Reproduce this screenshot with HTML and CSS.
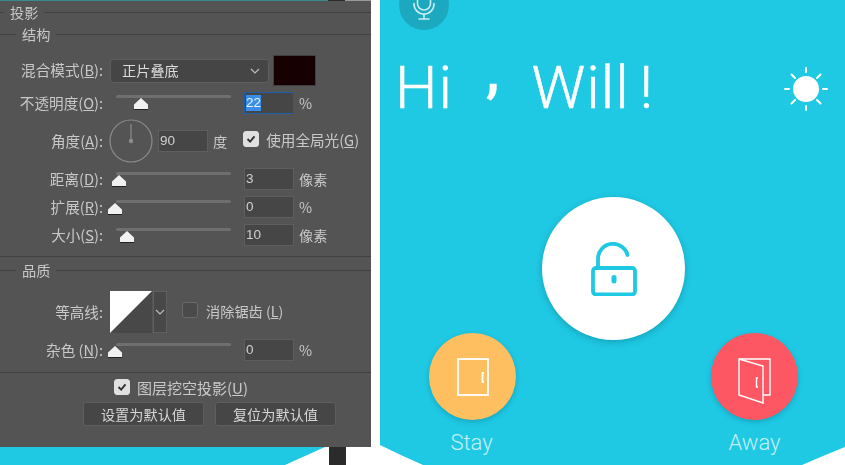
FILE: index.html
```html
<!DOCTYPE html>
<html lang="zh">
<head>
<meta charset="utf-8">
<title>Shadow panel and home app</title>
<link rel="stylesheet" href="styles.css">
</head>
<body>
<div class="stage">
  <section class="left">
    <div class="panel">
      <div class="legend title"><span>投影</span></div>
      <div class="legend group"><span>结构</span></div>

      <div class="row row-blend">
        <label class="label">混合模式(<u>B</u>):</label>
        <div class="select"><span>正片叠底</span>
          <svg class="chev" viewBox="0 0 10 6"><path d="M1 1l4 4 4-4"/></svg>
        </div>
        <div class="swatch"></div>
      </div>

      <div class="row row-opacity">
        <label class="label">不透明度(<u>O</u>):</label>
        <div class="slider slider-opacity"><i class="thumb" style="left:18px"></i></div>
        <div class="input focus"><span class="selected">22</span></div>
        <span class="unit">%</span>
      </div>

      <div class="row row-angle">
        <label class="label">角度(<u>A</u>):</label>
        <svg class="dial" viewBox="0 0 44 44"><circle cx="22" cy="22" r="21"/><path d="M22 22V5"/><circle class="pin" cx="22" cy="22" r="1.6"/></svg>
        <div class="input"><span>90</span></div>
        <span class="unit">度</span>
        <span class="check on"><svg viewBox="0 0 16 16"><path d="M4 8l3 3 5-6"/></svg></span>
        <span class="check-text">使用全局光(<u>G</u>)</span>
      </div>

      <div class="row row-gap">
        <label class="label">距离(<u>D</u>):</label>
        <div class="slider"><i class="thumb" style="left:-4px"></i></div>
        <div class="input"><span>3</span></div>
        <span class="unit">像素</span>
      </div>
      <div class="row row-gap">
        <label class="label">扩展(<u>R</u>):</label>
        <div class="slider"><i class="thumb" style="left:-8px"></i></div>
        <div class="input"><span>0</span></div>
        <span class="unit">%</span>
      </div>
      <div class="row row-gap">
        <label class="label">大小(<u>S</u>):</label>
        <div class="slider"><i class="thumb" style="left:4px"></i></div>
        <div class="input"><span>10</span></div>
        <span class="unit">像素</span>
      </div>

      <hr class="rule rule-a">
      <div class="legend group"><span>品质</span></div>

      <div class="row row-contour">
        <label class="label">等高线:</label>
        <svg class="contour" viewBox="0 0 42 42"><rect width="42" height="42" fill="#fff"/><path d="M42 0V42H0z" fill="#484848"/></svg>
        <div class="contour-drop"><svg class="chev" viewBox="0 0 10 6"><path d="M1 1l4 4 4-4"/></svg></div>
        <span class="check"></span>
        <span class="check-text">消除锯齿 (<u>L</u>)</span>
      </div>

      <div class="row row-noise">
        <label class="label">杂色 (<u>N</u>):</label>
        <div class="slider"><i class="thumb" style="left:-8px"></i></div>
        <div class="input"><span>0</span></div>
        <span class="unit">%</span>
      </div>

      <hr class="rule rule-b">

      <div class="row row-knockout">
        <span class="check on"><svg viewBox="0 0 16 16"><path d="M4 8l3 3 5-6"/></svg></span>
        <span class="check-text">图层挖空投影(<u>U</u>)</span>
      </div>
      <div class="row row-buttons">
        <button class="btn">设置为默认值</button>
        <button class="btn">复位为默认值</button>
      </div>
    </div>
    <div class="strip"></div>
    <div class="stand"></div>
  </section>

  <section class="phone">
    <div class="mic">
      <svg viewBox="0 0 24 24"><rect x="5.5" y="-10" width="13" height="20" rx="6.5"/><path d="M2 3v1a10 10 0 0 0 20 0V3M12 14v5M6.5 19h11"/></svg>
    </div>
    <header class="greeting">
      <h1><span class="hi">Hi</span><span class="comma">,</span><span class="will">Will</span><span class="bang">!</span></h1>
      <svg class="sun" viewBox="0 0 44 44">
        <circle cx="22" cy="22" r="13"/>
        <path d="M22 1v4M22 39v4M1 22h4M39 22h4M7.5 7.5l3.5 3.5M33 33l3.5 3.5M7.5 36.500l3.500-3.500M33 11l3.500-3.500"/>
      </svg>
    </header>
    <button class="lock-btn" aria-label="Unlock">
      <svg viewBox="0 0 46 54"><rect x="2" y="26" width="42" height="26.500" rx="3"/><path d="M7 26V17A15 15 0 0 1 36.500 13"/><path class="keyhole" d="M23 35.500v3.500"/></svg>
    </button>
    <div class="modes">
      <div class="mode">
        <div class="disc stay">
          <svg viewBox="0 0 32 38"><rect x="1" y="1" width="30" height="36"/><path class="handle" d="M27 15h-1.500v9H27"/></svg>
        </div>
        <span class="mode-stay">Stay</span>
      </div>
      <div class="mode">
        <div class="disc away">
          <svg viewBox="0 0 33 46"><path d="M1 1h31v36h-7"/><path d="M1 1l24 7v37L1 37z"/><path class="handle" d="M20 20h-1.500v9H20"/></svg>
        </div>
        <span>Away</span>
      </div>
    </div>
  </section>
</div>
</body>
</html>
```

FILE: styles.css
```css
* { box-sizing: border-box; }
html, body { margin: 0; height: 465px; overflow: hidden; background: #fff; }

.stage { display: flex; width: 845px; height: 465px; }

/* ---------- left: layer style dialog ---------- */
.left { position: relative; width: 380px; flex: none; }
.panel {
  width: 371px;
  height: 447px;
  padding-top: 1px;
  background: linear-gradient(90deg, #3a8a92 328px, #2b2b2b 328px, #2b2b2b 345px, #9a9a9a 345px) top / 100% 1px no-repeat, #545454;
  color: #c9c9c9;
  font: 14.2px/1 "Noto Sans CJK SC", "Liberation Sans", sans-serif;
  overflow: hidden;
  filter: blur(.45px);
}
.strip {
  width: 371px;
  height: 18px;
  background: #1fc8e3;
  clip-path: polygon(0 0, 325px 0, 285px 18px, 0 18px);
}
.stand {
  position: absolute;
  left: 329px;
  top: 447px;
  width: 17px;
  height: 18px;
  background: #2b2b2b;
}

.legend { display: flex; align-items: center; height: 23px; }
.legend::after { content: ""; flex: 1; height: 1px; background: #414141; margin-left: 6px; }
.legend::before { content: ""; height: 1px; background: #414141; margin-right: 6px; }
.title { height: 22px; }
.title::before { width: 4px; }
.group::before { width: 16px; }

.row { display: flex; align-items: center; }
.label { width: 103px; flex: none; text-align: right; white-space: nowrap; font-size: 14.6px; }
u { text-underline-offset: 1px; }

.row-blend { height: 31px; margin-top: 9px; }
.select {
  width: 159px;
  height: 24px;
  margin-left: 7px;
  padding: 0 8px 0 11px;
  display: flex;
  align-items: center;
  justify-content: space-between;
  background: #454545;
  border: 1px solid #5e5e5e;
  border-radius: 3px;
  color: #dcdcdc;
}
.chev { width: 10px; height: 6px; fill: none; stroke: #bdbdbd; stroke-width: 1.2; }
.swatch {
  width: 43px;
  height: 31px;
  margin-left: 4px;
  background: #160001;
  border: 1px solid #3f3f3f;
}

.row-opacity { height: 22px; margin-top: 6px; }
.row-angle { height: 42px; margin-top: 6px; }
.row-gap { height: 22px; margin-top: 6px; }
.row-noise { height: 22px; margin-top: 6px; }

.slider {
  position: relative;
  width: 115px;
  height: 3px;
  margin: -11px 13px 0 13px;
  flex: none;
  background: #6f6f6f;
  border-radius: 2px;
}
.slider-opacity { margin-top: -13px; }
.thumb {
  position: absolute;
  top: 3px;
  width: 14px;
  height: 12px;
  background: #f1f1f1;
  clip-path: polygon(50% 0, 100% 55%, 100% 100%, 0 100%, 0 55%);
  border-bottom: 1px solid #222;
}
.input {
  width: 50px;
  height: 22px;
  flex: none;
  padding-left: 1px;
  display: flex;
  align-items: center;
  background: #464646;
  border: 1px solid #5e5e5e;
  font: 13.5px/1 "Liberation Sans", sans-serif;
  color: #d0d0d0;
}
.input.focus { border-color: #1c5fa8; }
.selected { background: #3b8ee8; color: #e9f3ff; padding: 1px 0; }
.unit { margin-left: 5px; white-space: nowrap; }

.dial { width: 44px; height: 44px; margin-left: 6px; flex: none; fill: none; stroke: #8c8c8c; stroke-width: 1.2; }
.dial .pin { fill: #8c8c8c; }
.row-angle .input { margin-left: 5px; }
.check {
  width: 16px;
  height: 16px;
  flex: none;
  border-radius: 3px;
  border: 1px solid #6a6a6a;
  background: #4a4a4a;
}
.check svg { display: block; width: 14px; height: 14px; fill: none; stroke: #333; stroke-width: 2.2; }
.check.on { background: #e0e0e0; border-color: #e0e0e0; }
.check-text { margin-left: 8px; white-space: nowrap; }
.row-angle .check { margin-left: 16px; margin-top: -4px; }
.row-angle .check-text { margin-top: -1px; margin-left: 7px; font-size: 14.6px; }

.rule { height: 1px; border: 0; background: #414141; margin: 0; }
.rule-a { margin-top: 10px; margin-bottom: 2px; }

.row-contour { height: 42px; margin-top: 9px; }
.contour { width: 42px; height: 42px; margin-left: 7px; flex: none; }
.contour-drop {
  width: 14px;
  height: 42px;
  margin-left: 1px;
  display: flex;
  align-items: center;
  justify-content: center;
  background: #484848;
  border: 1px solid #5e5e5e;
}
.row-contour .check { margin-left: 15px; margin-top: -5px; }
.row-contour .check-text { margin-left: 8px; margin-top: -2px; }

.rule-b { margin-top: 11px; }

.row-knockout { height: 20px; margin-top: 4px; padding-left: 114px; }
.row-knockout .check-text { margin-left: 7px; font-size: 15px; }
.row-buttons { gap: 11px; padding-left: 83px; margin-top: 5px; }
.btn {
  width: 121px;
  height: 24px;
  padding: 0;
  background: #464646;
  border: 1px solid #5e5e5e;
  border-radius: 3px;
  color: #d6d6d6;
  font: 14.2px/1 "Noto Sans CJK SC", sans-serif;
}

/* ---------- right: phone app ---------- */
.phone {
  width: 465px;
  height: 465px;
  flex: none;
  overflow: hidden;
  background: #1fc8e3;
  color: #fff;
  font-family: Roboto, "Liberation Sans", sans-serif;
  clip-path: path("M0 0H465V447Q445 455 422 465H43Q20 455 0 445Z");
}
.mic {
  width: 50px;
  height: 50px;
  margin: -20px 0 0 19px;
  padding-top: 20px;
  display: flex;
  justify-content: center;
  border-radius: 50%;
  background: #1ca9c0;
}
.mic svg { width: 24px; height: 24px; fill: none; stroke: #c8eef5; stroke-width: 1.6; }

.greeting {
  display: flex;
  justify-content: space-between;
  align-items: center;
  height: 60px;
  margin-top: 28px;
  padding: 0 17px 0 15px;
}
.greeting h1 {
  margin: 0;
  display: flex;
  font-weight: 300;
  font-size: 60px;
  line-height: 60px;
  letter-spacing: 1px;
  -webkit-text-stroke: .5px #fff;
}
.comma { margin-left: 33px; font-weight: 500; transform: translateY(-17px); }
.will { margin-left: 31px; }
.bang { margin-left: 10px; }
.sun { width: 44px; height: 44px; margin-top: 2px; fill: #fff; stroke: none; }
.sun path { fill: none; stroke: #fff; stroke-width: 2; stroke-linecap: round; }

.lock-btn {
  display: block;
  width: 143px;
  height: 143px;
  margin: 79px 0 0 162px;
  padding: 0;
  border: 0;
  border-radius: 50%;
  background: #fff;
  box-shadow: 0 2px 6px rgba(0, 90, 110, .35);
}
.lock-btn svg { display: block; width: 46px; height: 54px; margin: 0 auto; fill: none; stroke: #1fc8e3; stroke-width: 3.8; stroke-linecap: round; }
.lock-btn .keyhole { stroke-width: 5; }

.modes { display: flex; justify-content: space-between; margin-top: -7px; padding: 0 47px 0 49px; }
.mode { display: flex; flex-direction: column; align-items: center; width: 87px; }
.mode span { margin-top: 11px; font-size: 22px; line-height: 24px; font-weight: 300; color: #c4f0f8; }
.mode .mode-stay { margin-right: 2px; }
.disc {
  width: 87px;
  height: 87px;
  display: flex;
  align-items: center;
  justify-content: center;
  border-radius: 50%;
  box-shadow: 0 2px 5px rgba(0, 90, 110, .3);
}
.disc svg { fill: none; stroke: #fff; stroke-width: 1.8; }
.stay { background: #fdbf5f; }
.stay svg { width: 32px; height: 38px; }
.away { background: #fd5763; }
.away svg { width: 33px; height: 46px; margin-top: 8px; stroke-width: 1.4; }
```
